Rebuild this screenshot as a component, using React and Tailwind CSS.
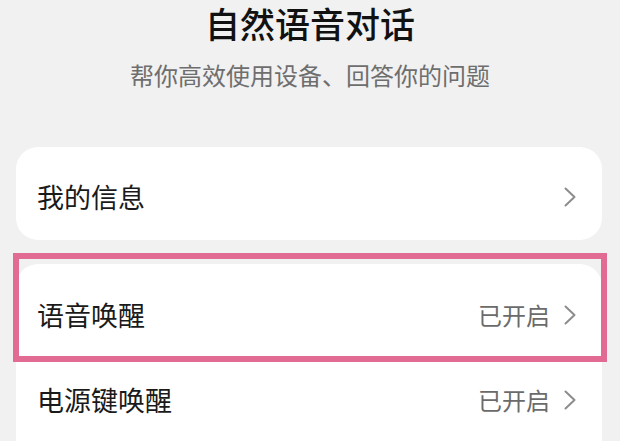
import React from 'react';

function Chevron() {
  return (
    <svg width="12" height="20" viewBox="0 0 12 20" fill="none" className="shrink-0">
      <path d="M1.5 1.5 L10.5 10 L1.5 18.5" stroke="#8c8c8c" strokeWidth="2" strokeLinecap="round" strokeLinejoin="round" />
    </svg>
  );
}

function Row({ label, value, className = '' }) {
  return (
    <div className={`flex items-center justify-between pl-[21px] pr-[26px] ${className}`}>
      <span className="text-[27px] leading-[30px] text-[#1a1a1a]">{label}</span>
      <div className="flex items-center gap-[14px]">
        {value && <span className="text-[24px] leading-[28px] text-[#6b6b6b]">{value}</span>}
        <Chevron />
      </div>
    </div>
  );
}

export default function App() {
  return (
    <div
      className="relative w-[620px] h-[441px] overflow-hidden bg-[#f1f1f1]"
      style={{ fontFamily: '"Noto Sans CJK SC", "Noto Sans", sans-serif' }}
    >
      <div className="flex flex-col items-center pt-[3px]">
        <h1 className="text-[35px] leading-[40px] font-medium text-[#111]">自然语音对话</h1>
        <p className="mt-[20px] text-[24px] leading-[24px] text-[#6e6e6e]">帮你高效使用设备、回答你的问题</p>
      </div>

      <div className="ml-[16px] mr-[18px] mt-[60px] h-[93px] rounded-[22px] bg-white flex flex-col justify-center pt-[6px]">
        <Row label="我的信息" />
      </div>

      <div className="ml-[16px] mr-[18px] mt-[24px] rounded-t-[22px] bg-white pt-[8px]">
        <Row label="语音唤醒" value="已开启" className="h-[85px]" />
        <Row label="电源键唤醒" value="已开启" className="h-[85px]" />
      </div>

      {/* highlight box drawn over the voice wake-up row */}
      <div className="absolute left-[13px] top-[253px] w-[594px] h-[109px] border-[6px] border-[#e26b93] pointer-events-none" />
    </div>
  );
}
